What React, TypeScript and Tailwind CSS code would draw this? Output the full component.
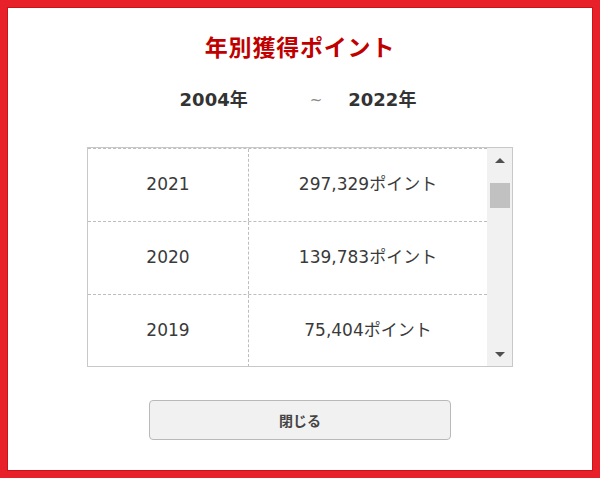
import React from "react";

const rows = [
  { year: "2021", pts: "297,329ポイント" },
  { year: "2020", pts: "139,783ポイント" },
  { year: "2019", pts: "75,404ポイント" },
];

export default function App() {
  return (
    <div
      className="w-[600px] h-[478px] bg-[#e8202a] p-[7px] box-border"
      style={{ fontFamily: '"DejaVu Sans", "Noto Sans CJK JP", sans-serif' }}
    >
      <div className="w-full h-full bg-white border border-[#c8141c] flex flex-col items-center">
        <h1
          className="mt-[26px] text-[23px] leading-[24px] font-bold text-[#c00000] tracking-[0.8px]"
          style={{ fontFamily: '"Noto Sans CJK JP", sans-serif' }}
        >
          年別獲得ポイント
        </h1>
        <div className="mt-[32px] flex items-center text-[18px] leading-[20px] font-bold text-[#333] mr-[4px]">
          <span>2004年</span>
          <span className="ml-[62px] text-[15px] font-normal text-[#888]">~</span>
          <span className="ml-[26px]">2022年</span>
        </div>
        <div className="mt-[37px] w-[426px] h-[220px] border border-[#c8c8c8] flex overflow-hidden">
          <div className="flex-1 overflow-hidden">
            {rows.map((r) => (
              <div
                key={r.year}
                className="flex h-[73px] border-t border-dashed border-[#bdbdbd] text-[17px] text-[#3a3a3a]"
              >
                <div className="w-[161px] flex items-center justify-center border-r border-dashed border-[#bdbdbd]">
                  {r.year}
                </div>
                <div className="flex-1 flex items-center justify-center">{r.pts}</div>
              </div>
            ))}
          </div>
          <div className="w-[25px] bg-[#f1f1f1] flex flex-col items-center">
            <div className="h-[24px] w-full flex items-center justify-center">
              <div className="w-0 h-0 border-l-[5px] border-r-[5px] border-b-[5px] border-l-transparent border-r-transparent border-b-[#505050]" />
            </div>
            <div className="mt-[11px] w-[20px] h-[25px] bg-[#c1c1c1]" />
            <div className="flex-1" />
            <div className="h-[24px] w-full flex items-center justify-center">
              <div className="w-0 h-0 border-l-[5px] border-r-[5px] border-t-[5px] border-l-transparent border-r-transparent border-t-[#505050]" />
            </div>
          </div>
        </div>
        <button
          className="mt-[33px] w-[302px] h-[40px] rounded-[4px] border border-[#b9b9b9] bg-[#f1f1f1] text-[14px] font-bold text-[#444]"
          style={{ fontFamily: '"Noto Sans CJK JP", sans-serif' }}
        >
          閉じる
        </button>
      </div>
    </div>
  );
}
